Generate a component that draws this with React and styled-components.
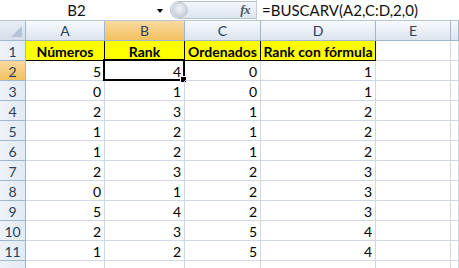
import React from "react";
import styled, { createGlobalStyle, css } from "styled-components";

const Global = createGlobalStyle`
  html, body { margin: 0; padding: 0; background: #fff; overflow: hidden; }
  body { font-family: Lato, "Open Sans", Arial, sans-serif; }
`;

const Window = styled.div`
  width: 459px;
  height: 268px;
  overflow: hidden;
  display: flex;
  flex-direction: column;
  background: #fff;
`;

const FormulaBar = styled.div`
  height: 21px;
  display: flex;
  align-items: stretch;
  background: #fff;
`;

const NameBox = styled.div`
  width: 165px;
  position: relative;
  display: flex;
  align-items: center;
  justify-content: center;
  font-size: 15px;
  color: #111;
  padding-right: 12px;
  box-sizing: border-box;
`;

const DropArrow = styled.div`
  position: absolute;
  right: 2px;
  top: 9px;
  width: 0;
  height: 0;
  border-left: 3.5px solid transparent;
  border-right: 3.5px solid transparent;
  border-top: 4px solid #000;
`;

const Pill = styled.div`
  margin: 1px 0 1px 5px;
  width: 86px;
  border: 1px solid #b3c0d0;
  border-right: none;
  border-radius: 10px 0 0 10px;
  background: linear-gradient(#f3f6fa, #dde5ef);
  display: flex;
  align-items: center;
  justify-content: space-between;
  padding: 0 6px 0 1px;
  box-sizing: border-box;
`;

const Knob = styled.div`
  width: 16px;
  height: 16px;
  border-radius: 50%;
  background: radial-gradient(circle at 45% 40%, #f2f4f7 0%, #d4d9e0 55%, #b4bcc7 100%);
  border: 1px solid #c4ccd6;
  box-sizing: border-box;
`;

const Fx = styled.span`
  font-family: "Liberation Serif", serif;
  font-style: italic;
  font-weight: bold;
  font-size: 13px;
  color: #4a5a70;
  letter-spacing: -0.5px;
`;

const FormulaInput = styled.div`
  flex: 1;
  border-left: 1px solid #c4cdd9;
  display: flex;
  align-items: center;
  padding-left: 5px;
  font-size: 15px;
  color: #111;
`;

const Strip = styled.div`
  height: 4px;
  background: #dfe6ef;
  border-bottom: 1px solid #b9c6d6;
`;

const Grid = styled.div`
  display: grid;
  grid-template-columns: 26px 79px 80px 76px 115px 75px 1fr;
  grid-auto-rows: 20px;
`;

const Cell = styled.div`
  box-sizing: border-box;
  border-right: 1px solid #d0d7e5;
  border-bottom: 1px solid #d0d7e5;
  font-size: 14px;
  color: #000;
  display: flex;
  align-items: center;
  justify-content: flex-end;
  padding: 1px 3px 0 0;
  position: relative;
  white-space: nowrap;
  ${(p) =>
    p.$head &&
    css`
      background: #ffff00;
      font-weight: bold;
      justify-content: center;
      padding: 1px 0 0 0;
      border-right: 1px solid #000;
      border-bottom: 1px solid #000;
    `}
`;

const ColHead = styled.div`
  box-sizing: border-box;
  border-right: 1px solid #9eb6ce;
  border-bottom: 1px solid #9eb6ce;
  background: ${(p) =>
    p.$sel
      ? "linear-gradient(#f9d99f, #f1c15f)"
      : "linear-gradient(#f8fafd 0%, #e9eef5 55%, #dce4ee 100%)"};
  display: flex;
  align-items: center;
  justify-content: center;
  font-size: 14px;
  color: #27415f;
  position: relative;
`;

const Corner = styled(ColHead)`
  background: linear-gradient(#e9eef5, #d5deea);
`;

const CornerTri = styled.div`
  position: absolute;
  right: 3px;
  bottom: 3px;
  width: 0;
  height: 0;
  border-left: 11px solid transparent;
  border-bottom: 11px solid #b5c3d5;
`;

const RowHead = styled.div`
  box-sizing: border-box;
  border-right: 1px solid #9eb6ce;
  border-bottom: 1px solid #9eb6ce;
  background: ${(p) =>
    p.$sel ? "linear-gradient(#f9d99f, #f1c15f)" : "linear-gradient(90deg, #eef2f8, #e4eaf3)"};
  display: flex;
  align-items: center;
  justify-content: center;
  font-size: 14px;
  color: #27415f;
  padding-top: 1px;
`;

const Selection = styled.div`
  position: absolute;
  left: -2px;
  top: -2px;
  right: -1px;
  bottom: -1px;
  border: 2px solid #000;
  pointer-events: none;
  &::after {
    content: "";
    position: absolute;
    right: -4px;
    bottom: -4px;
    width: 5px;
    height: 5px;
    background: #000;
    border: 1px solid #fff;
  }
`;

const cols = ["A", "B", "C", "D", "E", ""];
const headers = ["Números", "Rank", "Ordenados", "Rank con fórmula"];
const data = [
  [5, 4, 0, 1],
  [0, 1, 0, 1],
  [2, 3, 1, 2],
  [1, 2, 1, 2],
  [1, 2, 1, 2],
  [2, 3, 2, 3],
  [0, 1, 2, 3],
  [5, 4, 2, 3],
  [2, 3, 5, 4],
  [1, 2, 5, 4],
  null,
];

export default function App() {
  return (
    <Window>
      <Global />
      <FormulaBar>
        <NameBox>
          B2
          <DropArrow />
        </NameBox>
        <Pill>
          <Knob />
          <Fx>fx</Fx>
        </Pill>
        <FormulaInput>=BUSCARV(A2,C:D,2,0)</FormulaInput>
      </FormulaBar>
      <Strip />
      <Grid>
        <Corner>
          <CornerTri />
        </Corner>
        {cols.map((c, i) => (
          <ColHead key={i} $sel={c === "B"}>
            {c}
          </ColHead>
        ))}
        <RowHead>1</RowHead>
        {headers.map((h) => (
          <Cell key={h} $head>
            {h}
          </Cell>
        ))}
        <Cell />
        <Cell />
        {data.map((row, r) => (
          <React.Fragment key={r}>
            <RowHead $sel={r === 0}>{row ? r + 2 : ""}</RowHead>
            {(row || ["", "", "", ""]).map((v, c) => (
              <Cell key={c}>
                {v}
                {r === 0 && c === 1 && <Selection />}
              </Cell>
            ))}
            <Cell />
            <Cell />
          </React.Fragment>
        ))}
      </Grid>
    </Window>
  );
}
